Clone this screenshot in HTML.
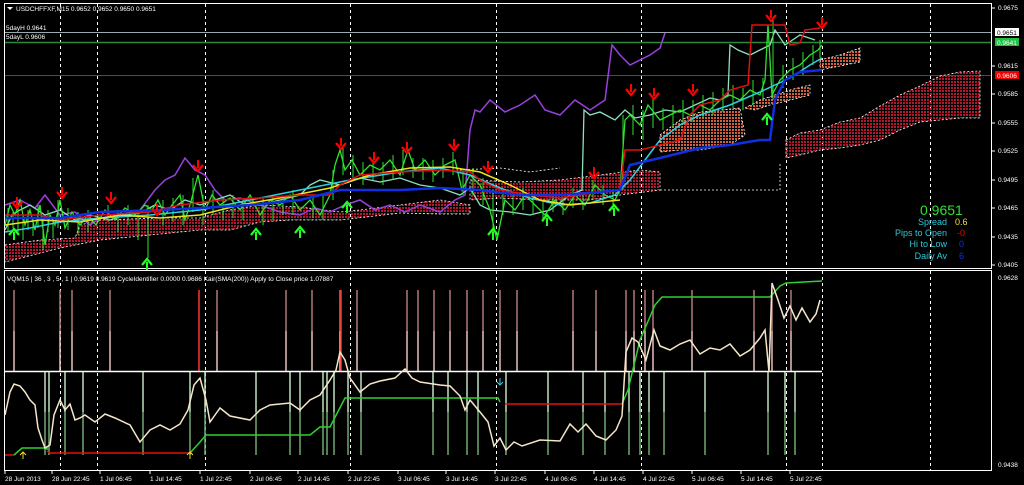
<!DOCTYPE html>
<html><head><meta charset="utf-8"><style>
html,body{margin:0;padding:0;background:#000;}
svg{display:block;font-family:"Liberation Sans",sans-serif;}
</style></head><body>
<svg width="1024" height="485" viewBox="0 0 1024 485" xmlns="http://www.w3.org/2000/svg">
<defs>
<pattern id="rd" width="3" height="3" patternUnits="userSpaceOnUse"><rect width="2" height="2" fill="#b01830"/></pattern>
<pattern id="od" width="3" height="3" patternUnits="userSpaceOnUse"><rect width="2" height="2" fill="#d06040"/></pattern>
<g id="dn"><path d="M0,-8V0" stroke="#f00" stroke-width="2"/><path d="M-5,-3L0,3L5,-3" fill="none" stroke="#f00" stroke-width="2.2"/></g>
<g id="up"><path d="M0,8V0" stroke="#2f2" stroke-width="2"/><path d="M-5,3L0,-3L5,3" fill="none" stroke="#2f2" stroke-width="2.2"/></g>
</defs>
<rect width="1024" height="485" fill="#000"/>
<rect x="4.5" y="3.5" width="987" height="265" fill="none" stroke="#fff"/>
<rect x="4.5" y="270.5" width="987" height="200" fill="none" stroke="#fff"/>
<g stroke="#fff" stroke-dasharray="3,3" stroke-width="1">
<path d="M60.5,4V268M97.5,4V268M205.5,4V268M350.5,4V268M496.5,4V268M641.5,4V268M786.5,4V268M822.5,4V268M930.5,4V268"/>
<path d="M60.5,271V470M97.5,271V470M205.5,271V470M350.5,271V470M496.5,271V470M641.5,271V470M786.5,271V470M822.5,271V470M930.5,271V470"/>
</g>
<path d="M5,32.5H991" stroke="#9aa" stroke-width="1"/>
<path d="M5,42.5H991" stroke="#2a8a3a" stroke-width="1.5"/>
<path d="M5,75.5H991" stroke="#f00" stroke-width="1"/>
<g stroke="#fff" stroke-width="0.8" stroke-dasharray="2,2">
<path d="M5,245 L40,240 L75,238 L80,225 L100,220 L160,218 L200,218 L230,210 L260,205 L300,207 L340,212 L360,210 L400,205 L440,200 L470,205 L470,214 L440,214 L400,213 L340,220 L290,220 L260,222 L230,230 L200,230 L150,235 L100,240 L60,248 L5,262Z" fill="url(#rd)"/>
<path d="M470,180 L520,182 L560,180 L600,175 L640,170 L660,172 L660,190 L620,195 L590,200 L540,200 L500,198 L470,200Z" fill="url(#rd)"/>
<path d="M660,135 L680,120 L700,112 L720,110 L740,108 L745,135 L730,145 L700,150 L680,150 L660,152Z" fill="url(#od)"/>
<path d="M745,108 L760,100 L775,95 L790,90 L810,85 L810,95 L790,100 L770,105 L755,110Z" fill="url(#od)"/>
<path d="M820,60 L840,55 L860,48 L860,62 L840,66 L820,70Z" fill="url(#od)"/>
<path d="M786,140 L800,133 L820,130 L840,122 L860,118 L880,106 L900,95 L920,86 L940,76 L960,72 L980,71 L980,118 L960,118 L940,120 L920,122 L900,130 L880,140 L860,145 L840,148 L820,150 L800,155 L786,158Z" fill="url(#rd)"/>
<path d="M660,190 L780,190 L780,162" fill="none"/>
<path d="M460,170 L500,168 L530,172 L560,168" fill="none"/>
</g>
<polyline fill="none" stroke="#9a40e0" stroke-width="1.5" points="5,205 20,200 35,208 45,195 60,215 75,212 90,225 100,218 120,215 140,210 155,190 165,180 175,175 185,158 195,170 205,175 215,190 225,200 240,198 260,205 280,212 300,215 315,208 330,212 345,205 360,200 375,210 390,205 405,212 420,205 440,212 455,200 465,195 470,130 475,110 480,112 490,100 505,112 520,105 535,95 545,110 560,115 575,100 590,110 605,100 612,45 620,55 630,65 640,60 650,55 660,48 665,33"/>
<polyline fill="none" stroke="#8fe0c0" stroke-width="1.3" points="5,230 12,215 20,210 30,205 45,215 60,210 75,220 90,215 110,220 125,215 140,213 155,205 170,210 185,200 200,205 215,200 230,195 245,205 260,205 280,200 300,195 310,185 320,180 340,185 360,178 380,182 400,178 420,185 440,188 460,195 470,188 480,205 490,210 510,212 530,215 550,210 570,195 582,190 584,110 590,115 600,112 615,120 625,110 635,118 650,115 665,110 680,112 695,105 710,98 720,100 728,95 730,45 738,50 750,55 760,50 770,45 775,30 785,45 800,35 815,40"/>
<g stroke="#30e030" stroke-width="1">
<path d="M8,208V232M13,212V228M18,205V235M23,215V240M28,210V230M33,218V236M38,205V228M43,215V250M48,210V232M53,218V238M58,200V228M68,208V230M78,212V235M88,210V232M108,205V222M118,210V232M128,205V225M138,210V240M148,205V258M163,200V225M173,198V222M183,195V225M193,178V212M203,195V225M213,190V215M223,198V220M233,195V218M243,200V220M263,198V225M273,195V220M283,198V215M293,190V215M313,195V218M323,195V220M333,170V200M343,148V175M353,155V180M363,162V185M373,160V180M383,162V185M393,155V180M403,150V175M413,158V178M423,158V180M433,160V182M443,158V178M453,152V175M463,170V195M473,168V195M483,178V205M493,190V240M503,190V215M513,195V215M523,188V210M533,195V215M543,200V222M553,195V212M563,198V215M573,188V208M583,192V210M593,180V200M603,185V205M613,190V210M623,115V190M633,105V135M643,110V140M653,98V128M663,108V130M673,105V128M683,100V125M693,100V122M703,95V118M713,92V115M723,88V112M733,85V108M743,88V110M753,80V105M763,78V100M773,20V100M783,65V88M793,58V80M803,52V75M813,45V65M820,40V58"/>
</g>
<polyline fill="none" stroke="#30e030" stroke-width="1.3" points="5,225 10,205 15,215 20,200 25,225 30,210 35,230 40,205 45,245 50,215 55,225 60,200 65,228 72,212 80,225 88,215 96,225 105,210 115,220 125,208 135,215 145,205 152,210 158,200 165,215 172,205 180,195 185,220 190,205 198,175 205,210 212,195 220,205 230,198 240,210 250,195 260,215 270,200 280,205 290,195 300,210 310,200 320,215 330,195 335,165 340,150 345,170 352,160 360,175 370,165 380,170 390,160 400,175 408,150 415,170 425,160 435,175 445,165 455,160 462,190 470,175 480,185 490,210 497,240 505,200 515,210 525,195 535,205 545,215 555,200 565,210 575,195 585,205 595,185 605,195 615,200 620,190 625,120 630,115 640,125 648,105 660,120 670,115 680,110 690,115 700,105 710,110 720,100 730,95 740,100 750,90 760,95 765,80 768,25 772,95 780,80 790,70 800,65 810,55 818,50 822,45"/>
<polyline fill="none" stroke="#30d0e0" stroke-width="1.5" points="5,232 30,228 60,222 100,218 150,215 200,210 250,200 300,190 350,180 400,172 440,168 470,175 500,188 530,198 560,205 590,203 615,195 630,180 645,160 660,140 680,125 700,115 730,105 760,92 790,78 810,65 822,58"/>
<polyline fill="none" stroke="#f0e020" stroke-width="1.5" points="5,225 40,220 80,222 120,215 160,218 200,215 240,205 280,198 330,188 370,175 410,168 450,167 480,172 510,185 540,200 570,205 600,202 620,200"/>
<polyline fill="none" stroke="#e01010" stroke-width="1.5" points="5,215 40,215 60,220 100,215 150,212 180,205 220,200 260,198 300,195 330,195 340,185 360,175 400,172 440,170 470,172 480,180 500,190 530,195 560,198 600,192 620,190 625,150 640,150 660,145 680,140 690,115 700,105 720,100 730,90 748,85 752,25 785,25 790,45 800,43 805,30 820,28"/>
<polyline fill="none" stroke="#1030e0" stroke-width="2.5" points="5,218 60,218 100,212 160,210 200,208 250,205 300,200 340,190 400,190 440,188 480,190 520,195 560,195 600,192 620,190 630,165 660,158 700,148 730,145 760,140 770,140 775,100 785,80 800,72 822,70"/>
<g>
<use href="#dn" x="17" y="205"/><use href="#dn" x="62" y="195"/><use href="#dn" x="111" y="200"/><use href="#dn" x="157" y="212"/><use href="#dn" x="198" y="168"/><use href="#dn" x="341" y="146"/><use href="#dn" x="374" y="160"/><use href="#dn" x="407" y="150"/><use href="#dn" x="454" y="147"/><use href="#dn" x="488" y="169"/><use href="#dn" x="594" y="175"/><use href="#dn" x="631" y="92"/><use href="#dn" x="654" y="96"/><use href="#dn" x="693" y="92"/><use href="#dn" x="771" y="18"/><use href="#dn" x="822" y="25"/>
<use href="#up" x="147" y="262"/><use href="#up" x="256" y="232"/><use href="#up" x="300" y="230"/><use href="#up" x="347" y="205"/><use href="#up" x="493" y="232"/><use href="#up" x="547" y="218"/><use href="#up" x="614" y="208"/><use href="#up" x="767" y="117"/><use href="#up" x="14" y="232"/>
</g>
<g fill="#fff" font-size="6.5">
<text x="16" y="11">USDCHFFXF,M15  0.9652 0.9652 0.9650 0.9651</text>
<text x="6" y="30">5dayH 0.9641</text>
<text x="6" y="39">5dayL 0.9606</text>
</g>
<path d="M7,7L10,10L13,7Z" fill="#fff"/>
<text x="920" y="215" fill="#30e030" font-size="14">0.9651</text>
<g font-size="9" text-anchor="end">
<text x="947" y="225" fill="#30c8d8">Spread</text><text x="955" y="225" fill="#f0e020" text-anchor="start">0.6</text>
<text x="947" y="236" fill="#30c8d8">Pips to Open</text><text x="957" y="236" fill="#f00" text-anchor="start">-0</text>
<text x="947" y="247" fill="#30c8d8">Hi to Low</text><text x="959" y="247" fill="#1030e0" text-anchor="start">0</text>
<text x="947" y="259" fill="#30c8d8">Daily Av</text><text x="959" y="259" fill="#1030e0" text-anchor="start">6</text>
</g>
<g fill="#fff" font-size="6.5">
<text x="998" y="10">0.9675</text><text x="998" y="68">0.9615</text><text x="998" y="96">0.9585</text><text x="998" y="125">0.9555</text><text x="998" y="153">0.9525</text><text x="998" y="182">0.9495</text><text x="998" y="210">0.9465</text><text x="998" y="239">0.9435</text><text x="998" y="267">0.9405</text>
<text x="998" y="280">0.9628</text><text x="998" y="467">0.9438</text>
</g>
<g stroke="#fff"><path d="M992,8H995M992,66H995M992,94H995M992,123H995M992,151H995M992,180H995M992,208H995M992,237H995M992,265H995"/></g>
<rect x="995" y="28" width="24" height="8" fill="#fff"/><text x="997" y="35" font-size="6.5" fill="#000">0.9651</text>
<rect x="995" y="38" width="24" height="8" fill="#20c040"/><text x="997" y="45" font-size="6.5" fill="#fff">0.9641</text>
<rect x="995" y="71" width="24" height="8" fill="#e00"/><text x="997" y="78" font-size="6.5" fill="#fff">0.9606</text>
<text x="7" y="281" fill="#fff" font-size="6.5">VQM15 |  36 , 3 , 5 , 1  |  0.9619 0.9619  CycleIdentifier 0.0000 0.9686  Kair(SMA(200)) Apply to Close price 1.07887</text>
<g stroke="#b07878" stroke-width="1.5">
<path d="M14,290V331M60,290V331M72,290V331M110,290V331M217,290V331M286,290V331M312,290V331M340,290V331M357,290V331M407,290V331M418,290V331M434,290V331M450,290V331M467,290V331M483,290V331M500,290V331M517,290V331M573,290V331M596,290V331M626,290V331M634,290V331M645,290V331M653,290V331M692,290V331M754,290V331M772,290V331M791,290V331"/>
</g>
<g stroke="#e8c0c0" stroke-width="1.5">
<path d="M14,331V371M60,331V371M72,331V371M110,331V371M217,331V371M286,331V371M312,331V371M340,331V371M357,331V371M407,331V371M418,331V371M434,331V371M450,331V371M467,331V371M483,331V371M500,331V371M517,331V371M573,331V371M596,331V371M626,331V371M634,331V371M645,331V371M653,331V371M692,331V371M754,331V371M772,331V371M791,331V371"/>
</g>
<path d="M199,290V371M341,290V371" stroke="#ff3030" stroke-width="1.5"/>
<g stroke="#c0e0c0" stroke-width="1.5">
<path d="M45,371V412M49,371V412M65,371V412M83,371V412M143,371V412M190,371V412M205,371V412M256,371V412M290,371V412M300,371V412M323,371V412M327,371V412M334,371V412M348,371V412M361,371V412M433,371V412M448,371V412M467,371V412M478,371V412M506,371V412M548,371V412M583,371V412M605,371V412M629,371V412M640,371V412M649,371V412M664,371V412M705,371V412M768,371V412M785,371V412M795,371V412"/>
</g>
<g stroke="#70a870" stroke-width="1.5">
<path d="M45,412V455M49,412V455M65,412V455M83,412V455M143,412V455M190,412V455M205,412V455M256,412V455M290,412V455M300,412V455M323,412V455M327,412V455M334,412V455M348,412V455M361,412V455M433,412V455M448,412V455M467,412V455M478,412V455M506,412V455M548,412V455M583,412V455M605,412V455M629,412V455M640,412V455M649,412V455M664,412V455M705,412V455M768,412V455M785,412V455M795,412V455"/>
</g>
<path d="M5,371.5H822" stroke="#fff" stroke-width="1.5"/>
<polyline fill="none" stroke="#e01010" stroke-width="1.5" points="5,455 14,455"/>
<polyline fill="none" stroke="#e01010" stroke-width="1.5" points="47,451 50,453 190,453"/>
<polyline fill="none" stroke="#e01010" stroke-width="1.5" points="505,404 622,404"/>
<polyline fill="none" stroke="#30d030" stroke-width="1.5" points="14,455 22,448 47,448 47,450"/>
<polyline fill="none" stroke="#30d030" stroke-width="1.5" points="190,453 200,442 206,435 310,435 320,427 330,427 345,398 498,398 500,402"/>
<polyline fill="none" stroke="#30d030" stroke-width="1.5" points="622,404 628,390 640,340 655,305 662,297 770,297 780,286 786,283 822,281"/>
<polyline fill="none" stroke="#f5e6c8" stroke-width="1.5" points="5,415 10,392 14,384 20,386 25,392 30,400 35,405 38,428 42,440 45,448 50,445 54,415 60,400 65,410 70,404 75,420 80,418 85,415 95,422 105,414 115,418 130,425 140,442 150,430 160,425 170,430 180,424 188,410 194,385 200,378 206,400 210,422 220,408 230,416 250,420 260,410 270,405 290,403 300,410 310,400 320,395 330,380 336,370 340,352 345,360 350,378 360,392 370,384 380,381 395,378 405,369 412,378 420,382 440,385 450,386 460,396 465,410 470,400 480,412 488,422 494,446 500,438 506,450 514,442 522,446 540,440 560,441 570,424 578,432 586,424 596,436 606,440 616,430 622,416 626,352 632,338 638,342 646,360 654,330 660,346 670,350 680,344 690,340 700,354 710,348 720,350 730,344 740,356 750,350 760,338 765,330 769,372 772,283 778,300 784,318 790,306 796,320 802,308 810,322 816,314 820,300"/>
<path d="M23,459V452M20,455L23,452L26,455" stroke="#f0e020" fill="none" stroke-width="1"/>
<path d="M190,459V452M187,455L190,452L193,455" stroke="#f0e020" fill="none" stroke-width="1"/>
<path d="M500,378V385M497,382L500,385L503,382" stroke="#30d0e0" fill="none" stroke-width="1"/>
<g fill="#fff" font-size="6.5">
<text x="5" y="481">28 Jun 2013</text><text x="52" y="481">28 Jun 22:45</text><text x="100" y="481">1 Jul 06:45</text><text x="150" y="481">1 Jul 14:45</text><text x="200" y="481">1 Jul 22:45</text><text x="250" y="481">2 Jul 06:45</text><text x="298" y="481">2 Jul 14:45</text><text x="348" y="481">2 Jul 22:45</text><text x="398" y="481">3 Jul 06:45</text><text x="446" y="481">3 Jul 14:45</text><text x="495" y="481">3 Jul 22:45</text><text x="545" y="481">4 Jul 06:45</text><text x="594" y="481">4 Jul 14:45</text><text x="643" y="481">4 Jul 22:45</text><text x="692" y="481">5 Jul 06:45</text><text x="741" y="481">5 Jul 14:45</text><text x="790" y="481">5 Jul 22:45</text>
</g>
<g stroke="#fff"><path d="M5,471V474M52,471V474M100,471V474M150,471V474M200,471V474M250,471V474M298,471V474M348,471V474M398,471V474M446,471V474M495,471V474M545,471V474M594,471V474M643,471V474M692,471V474M741,471V474M790,471V474"/></g>
</svg>
</body></html>
